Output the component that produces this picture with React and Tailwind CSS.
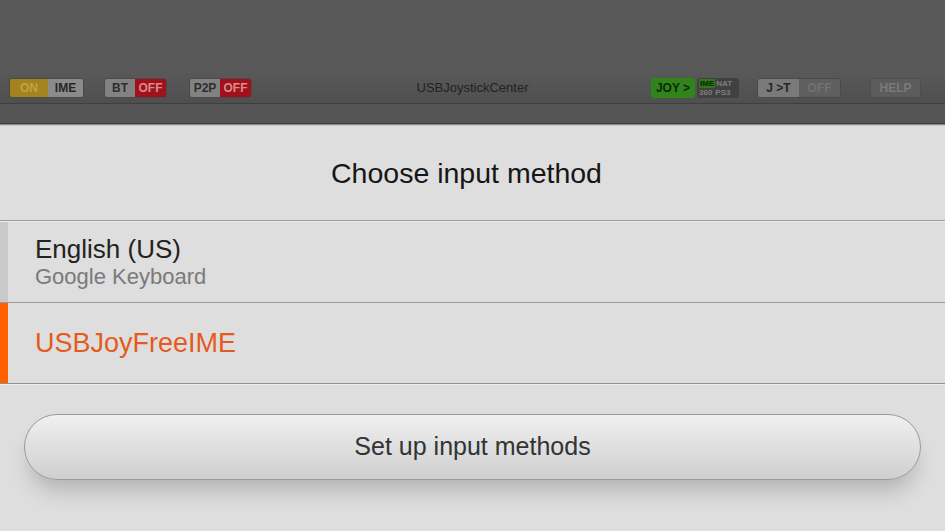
export default function App() {
  return (
    <div className="w-[945px] h-[531px] overflow-hidden flex flex-col bg-[#dedede]" style={{ fontFamily: "'Liberation Sans', Arial, sans-serif" }}>
      {/* dimmed top app area */}
      <div className="h-[124px] flex flex-col bg-[#595959]">
        <div className="h-[70px]" />
        <div className="h-[33px] flex items-center pt-[2px] bg-gradient-to-b from-[#595959] to-[#4f4f4f]">
          <div className="ml-[9px] flex h-[20px] rounded-[3px] overflow-hidden text-[12px] font-bold leading-none border border-[#4a4a4a]">
            <div className="w-[38px] bg-[#a3831f] text-[#c3a23a] flex items-center justify-center">ON</div>
            <div className="w-[35px] bg-[#8b8b8b] text-[#262626] flex items-center justify-center">IME</div>
          </div>
          <div className="ml-[20px] flex h-[20px] rounded-[3px] overflow-hidden text-[12px] font-bold leading-none border border-[#4a4a4a]">
            <div className="w-[30px] bg-[#828282] text-[#2e2e2e] flex items-center justify-center">BT</div>
            <div className="w-[31px] bg-[#a0111c] text-[#d88c8c] flex items-center justify-center">OFF</div>
          </div>
          <div className="ml-[22px] flex h-[20px] rounded-[3px] overflow-hidden text-[12px] font-bold leading-none border border-[#4a4a4a]">
            <div className="w-[30px] bg-[#828282] text-[#2e2e2e] flex items-center justify-center">P2P</div>
            <div className="w-[31px] bg-[#a0111c] text-[#d88c8c] flex items-center justify-center">OFF</div>
          </div>
          <div className="flex-1 text-center text-[13px] text-[#222] pl-[44px]">USBJoystickCenter</div>
          <div className="flex h-[20px] items-stretch gap-[2px] ml-[2px]">
            <div className="w-[44px] rounded-[3px] bg-[#2f8519] text-[#10260a] text-[12px] font-bold leading-none flex items-center justify-center">JOY &gt;</div>
            <div className="w-[42px] rounded-[3px] bg-[#414141] flex flex-col justify-center px-[2px] text-[8px] font-bold leading-[9px] text-[#7d7d7d]">
              <div className="flex gap-[1px]"><span className="bg-[#2c7a16] text-[#0e2408] px-[1px]">IME</span><span>NAT</span></div>
              <div className="flex gap-[3px]"><span>360</span><span>PS3</span></div>
            </div>
          </div>
          <div className="ml-[18px] flex h-[20px] rounded-[3px] overflow-hidden text-[12px] font-bold leading-none border border-[#4a4a4a]">
            <div className="w-[41px] bg-[#7a7a7a] text-[#262626] flex items-center justify-center">J &gt;T</div>
            <div className="w-[41px] bg-[#5f5f5f] text-[#727272] flex items-center justify-center">OFF</div>
          </div>
          <div className="ml-[29px] mr-[24px] w-[51px] h-[20px] rounded-[3px] bg-[#5c5c5c] border border-[#4e4e4e] text-[#7a7a7a] text-[12px] font-bold leading-none flex items-center justify-center">HELP</div>
        </div>
        <div className="h-[1px] bg-[#3f3f3f]" />
        <div className="flex-1 bg-[#555555]" />
        <div className="h-[1px] bg-[#3a3a3a]" />
      </div>
      <div className="h-[1px] bg-[#8a8a8a]" />
      <div className="h-[1px] bg-[#c9c9c9]" />
      {/* dialog */}
      <div className="h-[94px] flex items-center justify-center text-[28.5px] text-[#161616] pr-[12px]">Choose input method</div>
      <div className="h-[1px] bg-[#9a9a9a]" />
      <div className="h-[1px] bg-[#ececec]" />
      <div className="h-[80px] flex">
        <div className="w-[8px] bg-[#c9c9c9]" />
        <div className="pl-[27px] flex flex-col justify-center pb-[1px]">
          <div className="text-[26px] leading-[30px] text-[#222]">English (US)</div>
          <div className="text-[22px] leading-[26px] text-[#7a7a7a]">Google Keyboard</div>
        </div>
      </div>
      <div className="h-[1px] bg-[#9a9a9a]" />
      <div className="h-[80px] flex">
        <div className="w-[8px] bg-[#ff6000]" />
        <div className="pl-[27px] flex items-center text-[27px] text-[#e65a1c]">USBJoyFreeIME</div>
      </div>
      <div className="h-[1px] bg-[#8f8f8f]" />
      <div className="h-[1px] bg-[#ececec]" />
      <div className="px-[24px] pt-[29px] pb-[30px]">
        <div className="h-[66px] rounded-full border border-[#9a9a9a] bg-gradient-to-b from-[#f0f0f0] to-[#cfcfcf] flex items-center justify-center text-[25px] text-[#333] shadow-[0_16px_22px_-6px_rgba(0,0,0,0.2)]">
          Set up input methods
        </div>
      </div>
    </div>
  );
}
